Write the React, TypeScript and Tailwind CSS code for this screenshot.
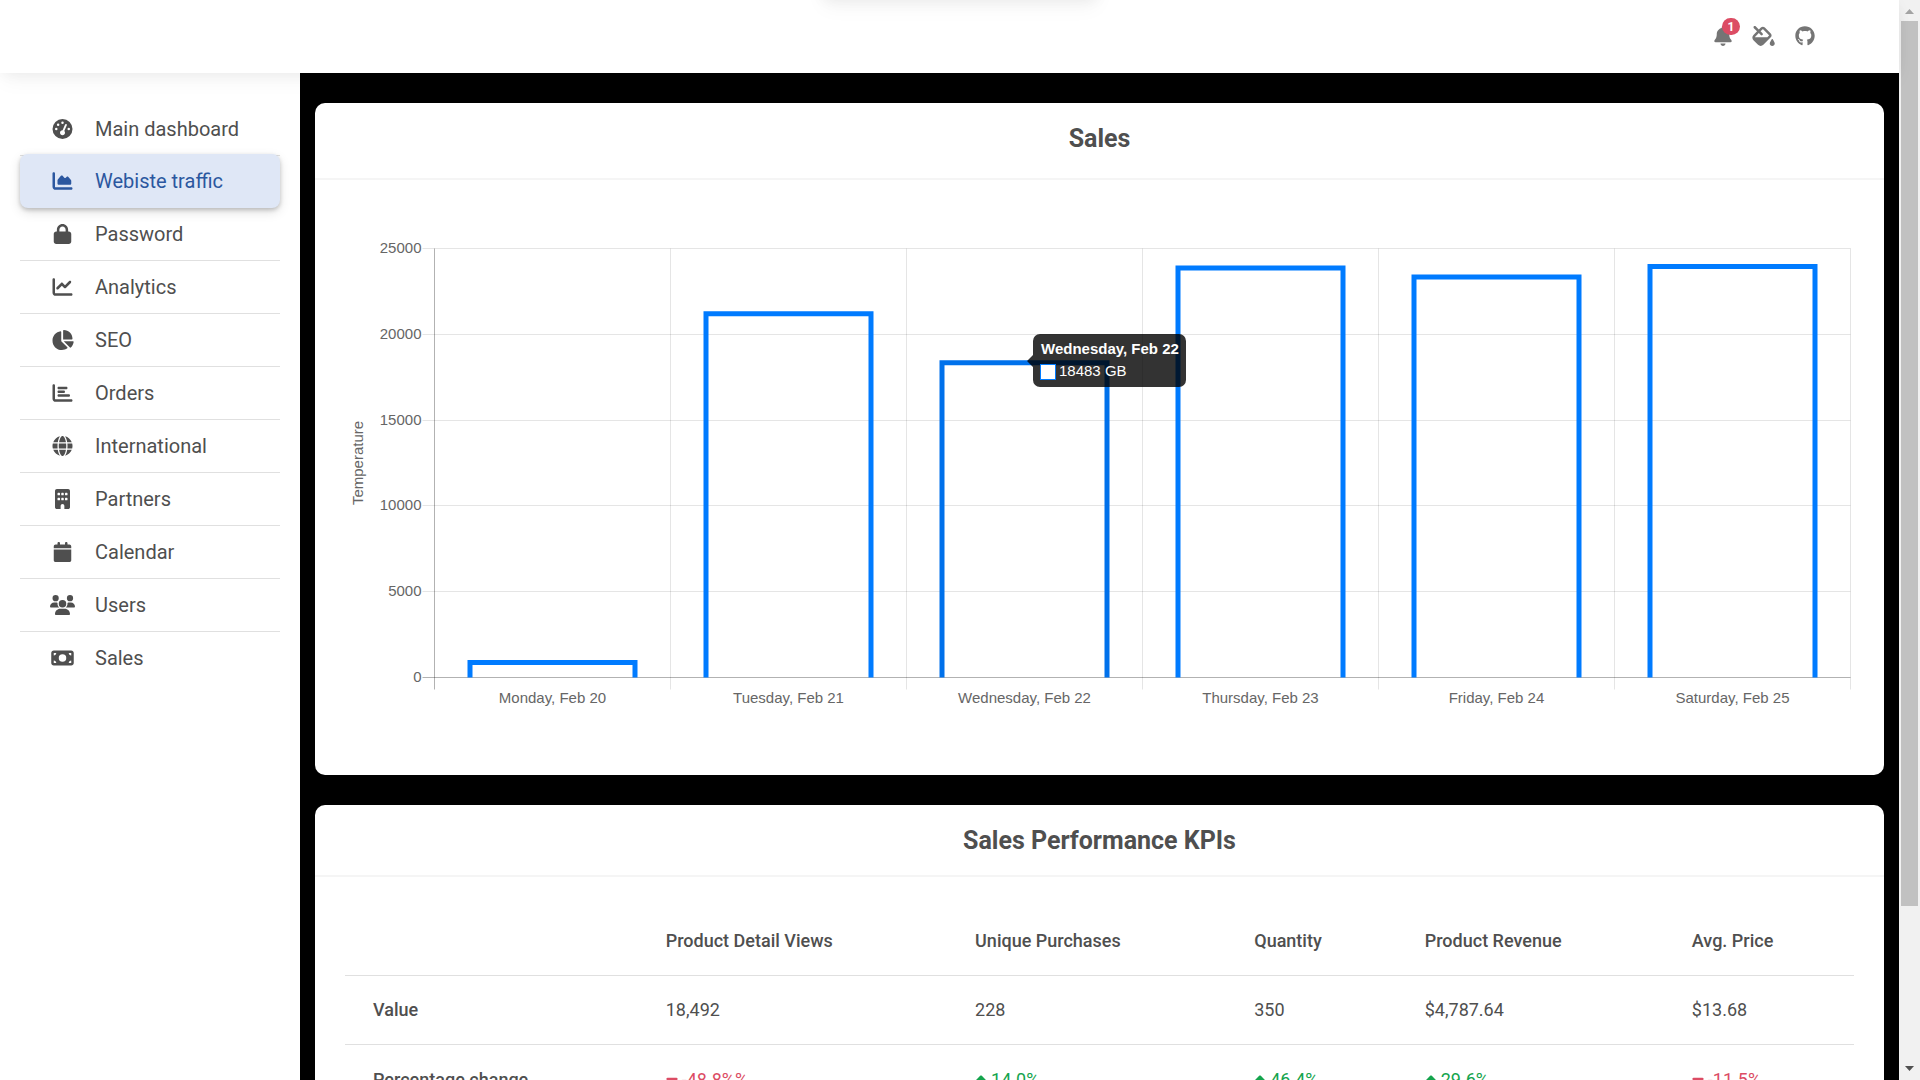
import {
  FaBell,
  FaBuilding,
  FaCalendar,
  FaCaretDown,
  FaCaretUp,
  FaChartArea,
  FaChartBar,
  FaChartLine,
  FaChartPie,
  FaFillDrip,
  FaGaugeHigh,
  FaGithub,
  FaGlobe,
  FaLock,
  FaMoneyBill,
  FaUsers,
} from "react-icons/fa6";
import type { IconType } from "react-icons";

const links: { label: string; icon: IconType; active?: boolean }[] = [
  { label: "Main dashboard", icon: FaGaugeHigh },
  { label: "Webiste traffic", icon: FaChartArea, active: true },
  { label: "Password", icon: FaLock },
  { label: "Analytics", icon: FaChartLine },
  { label: "SEO", icon: FaChartPie },
  { label: "Orders", icon: FaChartBar },
  { label: "International", icon: FaGlobe },
  { label: "Partners", icon: FaBuilding },
  { label: "Calendar", icon: FaCalendar },
  { label: "Users", icon: FaUsers },
  { label: "Sales", icon: FaMoneyBill },
];

const sales = [
  { day: "Monday, Feb 20", value: 1020 },
  { day: "Tuesday, Feb 21", value: 21345 },
  { day: "Wednesday, Feb 22", value: 18483 },
  { day: "Thursday, Feb 23", value: 24003 },
  { day: "Friday, Feb 24", value: 23489 },
  { day: "Saturday, Feb 25", value: 24092 },
];

const kpis = [
  { name: "Product Detail Views", value: "18,492", change: "-48.8%%", width: "w-[20.5%]" },
  { name: "Unique Purchases", value: "228", change: "14.0%", width: "w-[18.5%]" },
  { name: "Quantity", value: "350", change: "46.4%", width: "w-[11.3%]" },
  { name: "Product Revenue", value: "$4,787.64", change: "29.6%", width: "w-[17.7%]" },
  { name: "Avg. Price", value: "$13.68", change: "-11.5%", width: "w-[12.6%]" },
];

function Header() {
  return (
    <header className="relative z-10 flex h-[73px] shrink-0 items-center justify-end gap-5 bg-white pr-[84px] pb-px text-[#757575] shadow-[0_2px_15px_-3px_rgba(0,0,0,0.07),0_10px_20px_-2px_rgba(0,0,0,0.04)]">
      <div className="absolute -top-10 left-1/2 ml-[10px] h-10 w-[280px] -translate-x-1/2 rounded-lg bg-white shadow-[0_2px_15px_-3px_rgba(0,0,0,0.07),0_10px_20px_-2px_rgba(0,0,0,0.04)]" />
      <button type="button" aria-label="Notifications" className="relative">
        <FaBell className="h-5 w-[18px]" />
        <span className="absolute -top-2 left-2 flex h-[17px] w-[18px] items-center justify-center rounded-full bg-[#dc4c64] text-xs font-bold text-white">
          1
        </span>
      </button>
      <button type="button" aria-label="Theme">
        <FaFillDrip className="h-5 w-[23px]" />
      </button>
      <a href="#github" aria-label="GitHub">
        <FaGithub className="h-5 w-5" />
      </a>
    </header>
  );
}

function Sidebar() {
  return (
    <nav className="w-[300px] shrink-0 bg-white px-5 pt-[30px] text-xl leading-[30px]">
      {links.map(({ label, icon: Icon, active }) => (
        <a
          key={label}
          href="#"
          className={
            active
              ? "relative -mt-0.5 flex items-center rounded-lg bg-[#dfe7f6] px-[30px] py-3 text-[#2b579f] shadow-[0_2px_4px_rgba(0,0,0,0.2),0_4px_12px_rgba(0,0,0,0.12)]"
              : "flex items-center border-b border-[#e0e0e0] px-[30px] py-[11px] last:border-0"
          }
        >
          <Icon className="mr-5 h-5 w-[25px]" />
          {label}
        </a>
      ))}
    </nav>
  );
}

/* Plot area of the chart, in view box units */
const left = 89.5;
const right = 1505.5;
const top = 38.5;
const bottom = 467.5;
const step = (right - left) / sales.length;
const toY = (value: number) => bottom - (value / 25000) * (bottom - top);

function SalesChart() {
  return (
    <svg
      viewBox="0 0 1509 535"
      className="w-full"
      fontFamily='"Liberation Sans", Arial, sans-serif'
      fontSize="15"
      fill="#666"
      role="img"
      aria-label="Sales per day"
    >
      {[0, 5000, 10000, 15000, 20000, 25000].map((tick) => {
        const y = Math.floor(toY(tick)) + 0.5;
        return (
          <g key={tick}>
            <line x1={left - 12} x2={right} y1={y} y2={y} stroke="#000" strokeOpacity={tick ? 0.1 : 0.3} />
            <text x={left - 13} y={y + 4} textAnchor="end">
              {tick}
            </text>
          </g>
        );
      })}
      {[0, 1, 2, 3, 4, 5, 6].map((i) => (
        <line
          key={i}
          x1={left + i * step}
          x2={left + i * step}
          y1={top}
          y2={bottom + 12}
          stroke="#000"
          strokeOpacity={i ? 0.1 : 0.3}
        />
      ))}
      {sales.map(({ day, value }, i) => {
        const center = left + (i + 0.5) * step;
        const y = toY(value) + 2.5;
        return (
          <g key={day}>
            <path
              d={`M${center - 82.5} ${bottom}V${y}H${center + 82.5}V${bottom}`}
              fill="none"
              stroke={i === 2 ? "#0071eb" : "#007bff"}
              strokeWidth="5"
            />
            <text x={center} y={bottom + 25} textAnchor="middle">
              {day}
            </text>
          </g>
        );
      })}
      <text transform="translate(18 253) rotate(-90)" textAnchor="middle">
        Temperature
      </text>
      <path
        d="M695 124H834a7 7 0 0 1 7 7V170a7 7 0 0 1 -7 7H695a7 7 0 0 1 -7 -7V157L682 151L688 145V131a7 7 0 0 1 7 -7Z"
        fill="#000"
        fillOpacity="0.8"
      />
      <text x="696" y="144" fill="#fff" fontWeight="bold">
        Wednesday, Feb 22
      </text>
      <rect x="695.5" y="154.5" width="15" height="15" fill="#fff" stroke="#007bff" />
      <text x="714" y="166" fill="#fff">
        18483 GB
      </text>
    </svg>
  );
}

function KpiTable() {
  return (
    <table className="w-full text-left text-lg leading-7">
      <thead>
        <tr className="border-b border-[#e0e0e0]">
          <th className="w-[19.4%] px-7 py-5" />
          {kpis.map(({ name, width }) => (
            <th key={name} scope="col" className={`${width} px-7 py-5 font-medium whitespace-nowrap`}>
              {name}
            </th>
          ))}
        </tr>
      </thead>
      <tbody>
        <tr className="border-b border-[#e0e0e0]">
          <th scope="row" className="px-7 py-5 font-medium">
            Value
          </th>
          {kpis.map(({ name, value }) => (
            <td key={name} className="px-7 py-5">
              {value}
            </td>
          ))}
        </tr>
        <tr className="border-b border-[#e0e0e0] leading-[30px]">
          <th scope="row" className="px-7 py-5 font-medium">
            Percentage change
          </th>
          {kpis.map(({ name, change }) => {
            const down = change.startsWith("-");
            const Caret = down ? FaCaretDown : FaCaretUp;
            return (
              <td key={name} className="px-7 py-5">
                <span className={`flex items-center gap-1 ${down ? "text-[#dc4c64]" : "text-[#14a44d]"}`}>
                  <Caret className="h-[18px] w-3" />
                  {change}
                </span>
              </td>
            );
          })}
        </tr>
      </tbody>
    </table>
  );
}

function Scrollbar() {
  return (
    <div aria-hidden="true" className="flex w-[21px] shrink-0 flex-col items-center bg-[#f1f1f1]">
      <svg viewBox="0 0 21 21" className="h-[21px] w-[21px]" fill="#a3a3a3">
        <path d="M6 14L10.500 9L15 14Z" />
      </svg>
      <div className="w-[17px] grow-[885] bg-[#c1c1c1]" />
      <div className="grow-[153]" />
      <svg viewBox="0 0 21 21" className="h-[21px] w-[21px]" fill="#505050">
        <path d="M6 7L10.500 12L15 7Z" />
      </svg>
    </div>
  );
}

export default function App() {
  return (
    <div className="flex h-screen overflow-hidden bg-white font-[Roboto,sans-serif] text-[#4f4f4f]">
      <div className="flex min-w-0 flex-1 flex-col">
        <Header />
        <div className="flex min-h-0 flex-1">
          <Sidebar />
          <main className="min-w-0 flex-1 space-y-[30px] overflow-hidden bg-black px-[15px] pt-[30px]">
            <section className="rounded-[10px] bg-white">
              <h1 className="border-b-2 border-[#f5f5f5] pt-[21px] pb-6 text-center text-[25px] leading-[30px] font-bold">
                Sales
              </h1>
              <div className="p-[30px]">
                <SalesChart />
              </div>
            </section>
            <section className="rounded-[10px] bg-white">
              <h2 className="border-b-2 border-[#f5f5f5] pt-[21px] pb-[19px] text-center text-[25px] leading-[30px] font-bold">
                Sales Performance KPIs
              </h2>
              <div className="p-[30px]">
                <KpiTable />
              </div>
            </section>
          </main>
        </div>
      </div>
      <Scrollbar />
    </div>
  );
}
